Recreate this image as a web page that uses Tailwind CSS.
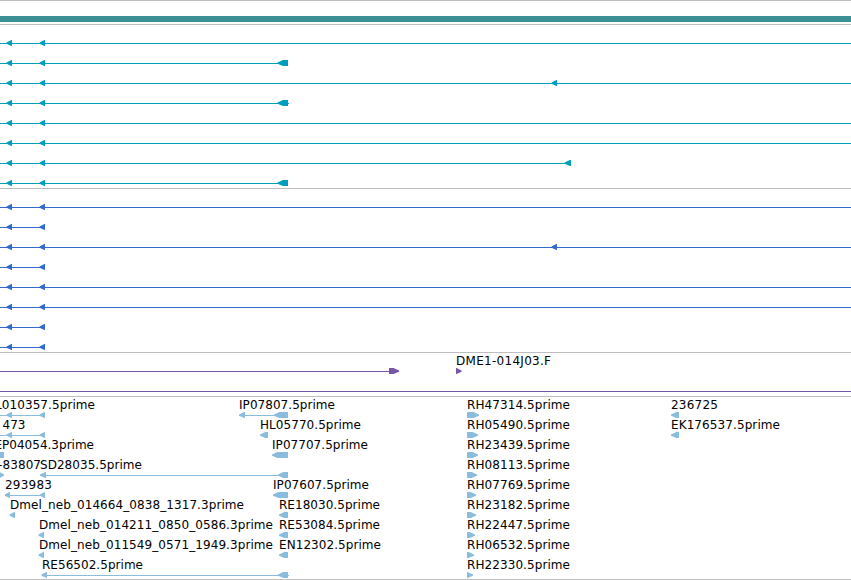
<!DOCTYPE html>
<html lang="en">
<head>
    <meta charset="UTF-8">
    <meta name="viewport" content="width=device-width, initial-scale=1.0">
    <title>Genome Browser</title>
    <script src="https://cdn.jsdelivr.net/npm/@tailwindcss/browser@4"></script>
</head>
<body class="bg-white">
    <main class="flex h-[580px] w-[851px] flex-col overflow-hidden border-b border-[#bebebe] font-['DejaVu_Sans',sans-serif] text-[12px] text-black">
        <div class="h-6 shrink-0 border-t border-[#bebebe] pt-[15px]">
            <div class="h-1.5 bg-[#3c8f94]"></div>
        </div>
        <section id="genes" class="h-[164px] shrink-0 border-t border-[#bebebe] pt-[3px] text-[#009ebd]"></section>
        <section id="transcripts" class="h-[164px] shrink-0 border-t border-[#bebebe] pt-[3px] text-[#316bcd]"></section>
        <section id="clones" class="h-11 shrink-0 border-t border-[#bebebe] pt-[3px] text-[#7657a7]"></section>
        <section id="ests" class="h-[183px] shrink-0 border-t border-[#bebebe] pt-[3px] text-[#8abddd]"></section>
    </main>

    <script>
        // lines: [from, to], left/right: [start, end] of an arrow, labels: [text, start, end]
        const both = [[6.5, 12], [39.5, 45]];
        const est = (end) => [467, end];

        const tracks = {
            genes: [
                { lines: [[0, 851]], left: both },
                { lines: [[0, 288]], left: [...both, [277.5, 288]] },
                { lines: [[0, 851]], left: [...both, [551.5, 557]] },
                { lines: [[0, 289]], left: [...both, [277.5, 288]] },
                { lines: [[0, 851]], left: both },
                { lines: [[0, 851]], left: both },
                { lines: [[0, 571]], left: [...both, [564.5, 571]] },
                { lines: [[0, 288]], left: [...both, [277.5, 288]] },
            ],
            transcripts: [
                { lines: [[0, 851]], left: both },
                { lines: [[0, 45]], left: both },
                { lines: [[0, 851]], left: [...both, [551.5, 557]] },
                { lines: [[0, 45]], left: both },
                { lines: [[0, 851]], left: both },
                { lines: [[0, 851]], left: both },
                { lines: [[0, 45]], left: both },
                { lines: [[0, 45]], left: both },
            ],
            clones: [
                { lines: [[0, 399]], right: [[389, 399], [456, 461.5]], labels: [['DME1-014J03.F', 456, 551]] },
                { lines: [[0, 851]] },
            ],
            ests: [
                { lines: [[0, 45], [239, 288]], left: [...both, [239, 245], [274, 288], [671, 679]], right: [est(479)],
                  labels: [['L010357.5prime', -5, 95], ['IP07807.5prime', 239, 335], ['RH47314.5prime', 467, 570], ['236725', 671, 718]] },
                { lines: [[0, 45]], left: [...both, [260, 268], [671, 679]], right: [est(478)],
                  labels: [['473', 2.5, 25.5], ['HL05770.5prime', 260, 361], ['RH05490.5prime', 467, 570], ['EK176537.5prime', 671, 780]] },
                { boxes: [[0, 4]], left: [[272, 288]], right: [est(478)],
                  labels: [['EP04054.3prime', -5.5, 94], ['IP07707.5prime', 272, 368], ['RH23439.5prime', 467, 570]] },
                { lines: [[40, 288]], left: [[40, 46], [278, 288]], right: [[-1, 4], est(477)],
                  labels: [['-83807', -2, 41], ['SD28035.5prime', 40, 142], ['RH08113.5prime', 467, 570]] },
                { lines: [[5, 45]], left: [[5, 10], [40, 45], [273, 288]], right: [est(476)],
                  labels: [['293983', 5, 52], ['IP07607.5prime', 273, 369], ['RH07769.5prime', 467, 570]] },
                { left: [[9.5, 15], [279, 288]], right: [est(476)],
                  labels: [['Dmel_neb_014664_0838_1317.3prime', 10, 244], ['RE18030.5prime', 279, 380], ['RH23182.5prime', 467, 570]] },
                { left: [[38.5, 44], [279, 288]], right: [est(475)],
                  labels: [['Dmel_neb_014211_0850_0586.3prime', 39, 273], ['RE53084.5prime', 279, 380], ['RH22447.5prime', 467, 570]] },
                { left: [[38.5, 44], [279, 288]], right: [est(474)],
                  labels: [['Dmel_neb_011549_0571_1949.3prime', 39, 273], ['EN12302.5prime', 279, 381], ['RH06532.5prime', 467, 570]] },
                { lines: [[42, 289]], left: [[41.5, 47], [278, 288]], right: [est(473)],
                  labels: [['RE56502.5prime', 42, 143], ['RH22330.5prime', 467, 570]] },
            ],
        };

        // arrow heads are at most 6px deep, the rest of the feature is a block
        function arrow(tip, back) {
            const head = Math.sign(back - tip) * Math.min(6, Math.abs(back - tip));
            return `<polygon points="${tip},14.4 ${tip + head * 0.9},12 ${back},12 ${back},18 ${tip + head * 0.9},18 ${tip},15.8" fill="currentColor"/>`;
        }

        function drawRow({ lines = [], boxes = [], left = [], right = [], labels = [] }) {
            return `
                <svg class="block h-5 w-[851px] overflow-visible" viewBox="0 0 851 20">
                    ${lines.map(([a, b]) => `<rect x="${a}" y="15" width="${b - a}" height="1" fill="currentColor"/>`).join('')}
                    ${boxes.map(([a, b]) => `<rect x="${a}" y="12" width="${b - a}" height="6" fill="currentColor"/>`).join('')}
                    ${left.map(([a, b]) => arrow(a, b)).join('')}
                    ${right.map(([a, b]) => arrow(b, a)).join('')}
                    ${labels.map(([text, a, b]) => `<text x="${a}" y="9" textLength="${b - a}" fill="black">${text}</text>`).join('')}
                </svg>`;
        }

        for (const [id, rows] of Object.entries(tracks)) {
            document.getElementById(id).innerHTML = rows.map(drawRow).join('');
        }
    </script>
</body>
</html>
